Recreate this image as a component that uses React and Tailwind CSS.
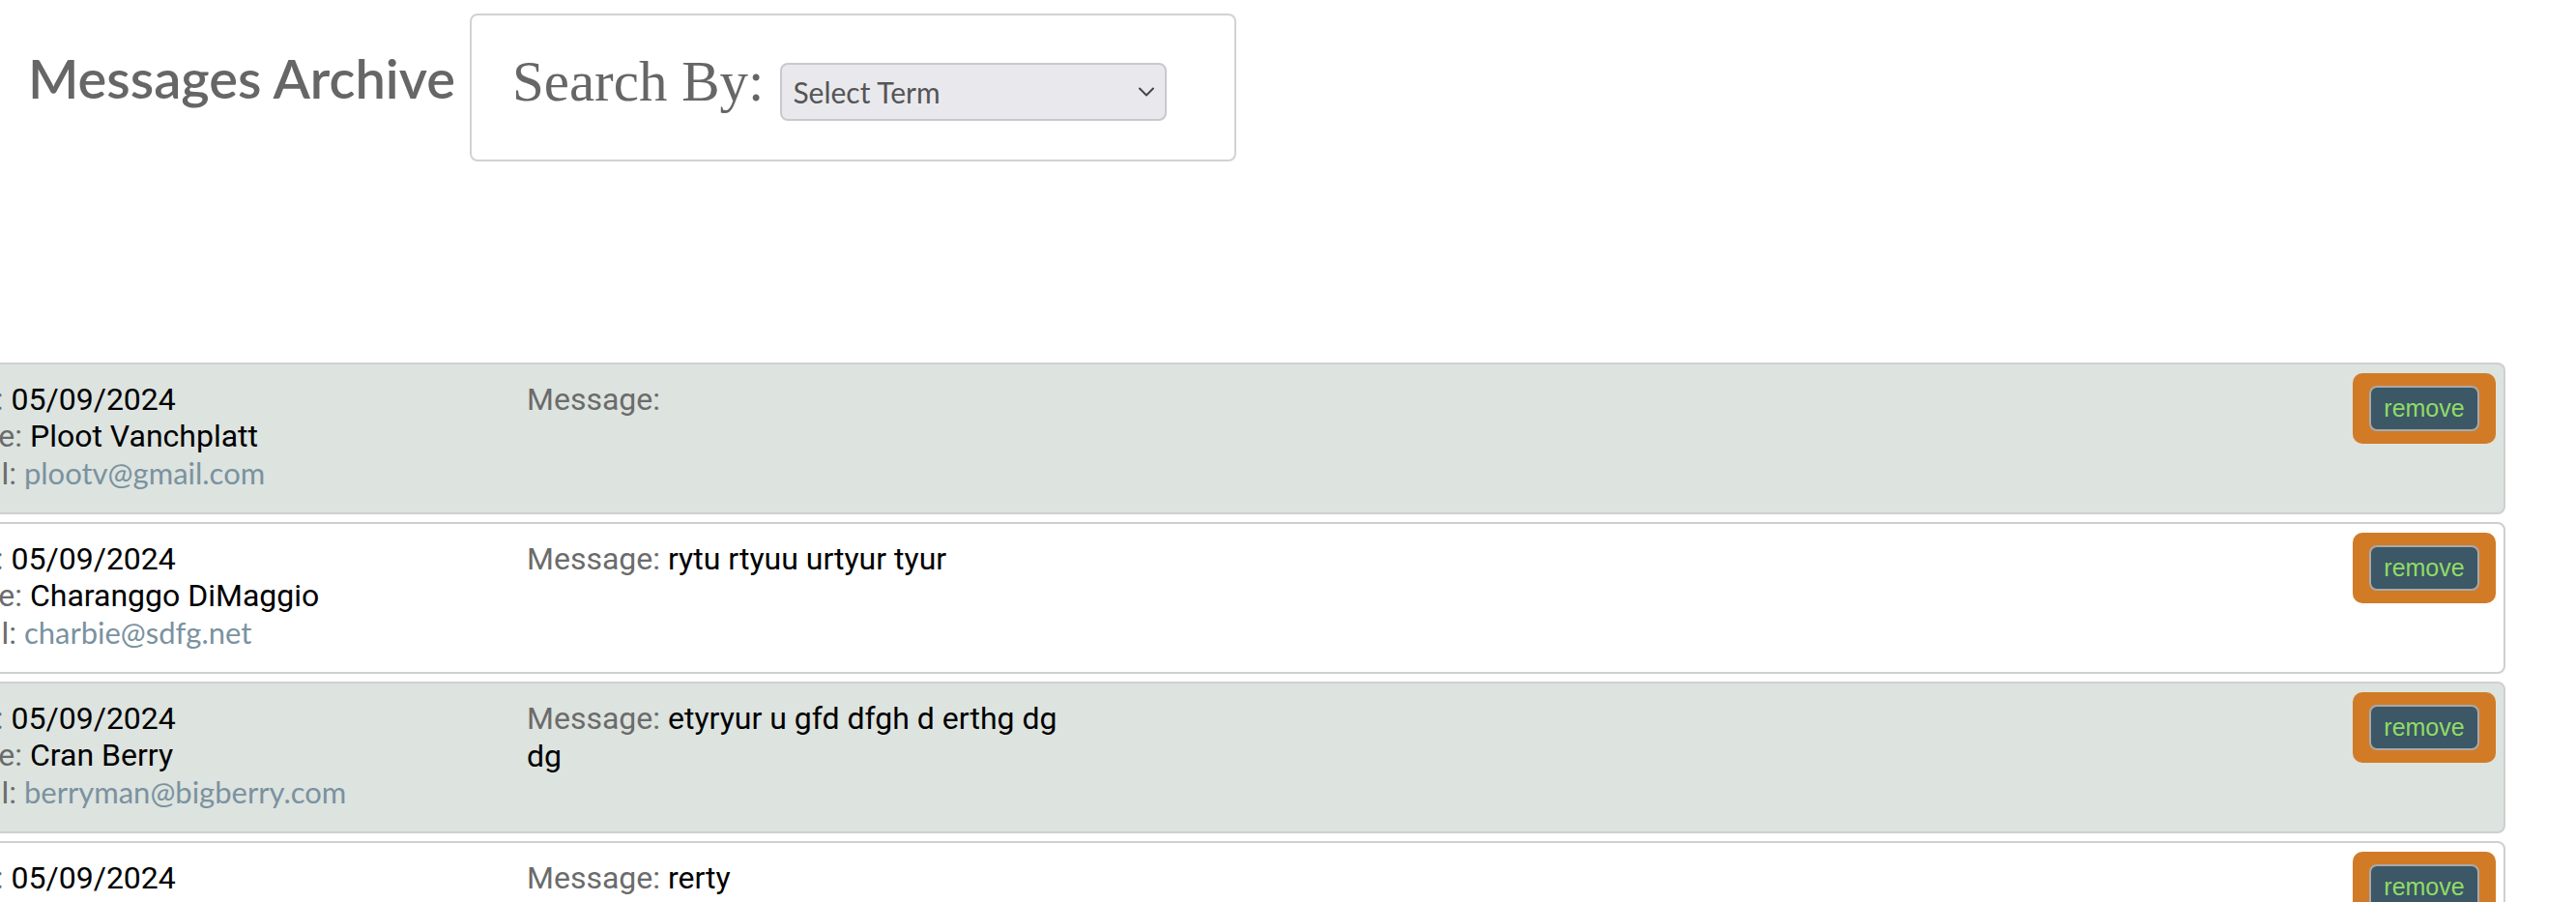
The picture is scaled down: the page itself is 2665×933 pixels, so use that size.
import React from "react";

const rows = [
  { date: "05/09/2024", name: "Ploot Vanchplatt", email: "plootv@gmail.com", message: "", shaded: true },
  { date: "05/09/2024", name: "Charanggo DiMaggio", email: "charbie@sdfg.net", message: "rytu rtyuu urtyur tyur", shaded: false },
  { date: "05/09/2024", name: "Cran Berry", email: "berryman@bigberry.com", message: "etyryur u gfd dfgh d erthg dg dg", shaded: true },
  { date: "05/09/2024", name: "Rerty Smith", email: "rerty@example.com", message: "rerty", shaded: false },
];

function RemoveButton() {
  return (
    <div className="mt-[9px] mr-[8px] shrink-0 self-start rounded-[10px] bg-[#d27b26] px-[17px] py-[13px]">
      <button
        type="button"
        className="flex h-[47px] w-[114px] items-center justify-center rounded-[8px] border-2 border-[#a9a9a9] bg-[#3c5766] text-[25px] leading-none text-[#8fdc66]"
        style={{ fontFamily: '"Liberation Sans", Arial, sans-serif' }}
      >
        remove
      </button>
    </div>
  );
}

function Row({ r }) {
  return (
    <div
      className={`flex h-[157px] rounded-[8px] border-2 border-[#cfcfcf] pl-[28px] ${r.shaded ? "bg-[#dde3df]" : "bg-white"}`}
    >
      <div className="w-[615px] shrink-0 pt-[17px] text-[32px] leading-[38px] font-['Roboto',sans-serif]">
        <div>
          <span className="text-[#6b6b6b]">Date: </span>
          <span className="text-black">{r.date}</span>
        </div>
        <div>
          <span className="text-[#6b6b6b]">Name: </span>
          <span className="text-black">{r.name}</span>
        </div>
        <div>
          <span className="text-[#6b6b6b]">Email: </span>
          <span className="text-[31px] text-[#7a929f] font-['Lato',sans-serif]">{r.email}</span>
        </div>
      </div>
      <div className="w-[560px] shrink-0 pt-[17px] text-[32px] leading-[39px] font-['Roboto',sans-serif]">
        <span className="text-[#6b6b6b]">Message: </span>
        <span className="text-black">{r.message}</span>
      </div>
      <div className="flex-1" />
      <RemoveButton />
    </div>
  );
}

export default function App() {
  return (
    <div className="h-screen overflow-hidden bg-white">
      <header className="flex items-start pt-[14px]">
        <h1 className="ml-[29px] mt-[39px] whitespace-nowrap text-[56px] leading-none font-semibold text-[#666666] font-['Lato',sans-serif]">
          Messages Archive
        </h1>
        <div className="ml-[15px] flex h-[153px] w-[793px] items-start rounded-[8px] border-2 border-[#d2d2d2] pl-[42px] pt-[39px]">
          <span className="whitespace-nowrap text-[59px] leading-none text-[#666666] font-['Liberation_Serif',serif]">
            Search By:
          </span>
          <div className="ml-[17px] mt-[10px] flex h-[60px] w-[400px] items-center justify-between rounded-[8px] border-2 border-[#c9c9cd] bg-[#e9e9ed] pl-[11px] pr-[10px]">
            <span className="text-[30px] leading-none text-[#555555] font-['Lato',sans-serif]">Select Term</span>
            <svg width="18" height="12" viewBox="0 0 18 12" fill="none">
              <path d="M2 2.5 L9 9.5 L16 2.5" stroke="#444" strokeWidth="2" strokeLinecap="round" strokeLinejoin="round" />
            </svg>
          </div>
        </div>
      </header>
      <div className="ml-[-100px] mr-[73px] mt-[208px] flex flex-col gap-[8px]">
        {rows.map((r, i) => (
          <Row key={i} r={r} />
        ))}
      </div>
    </div>
  );
}
